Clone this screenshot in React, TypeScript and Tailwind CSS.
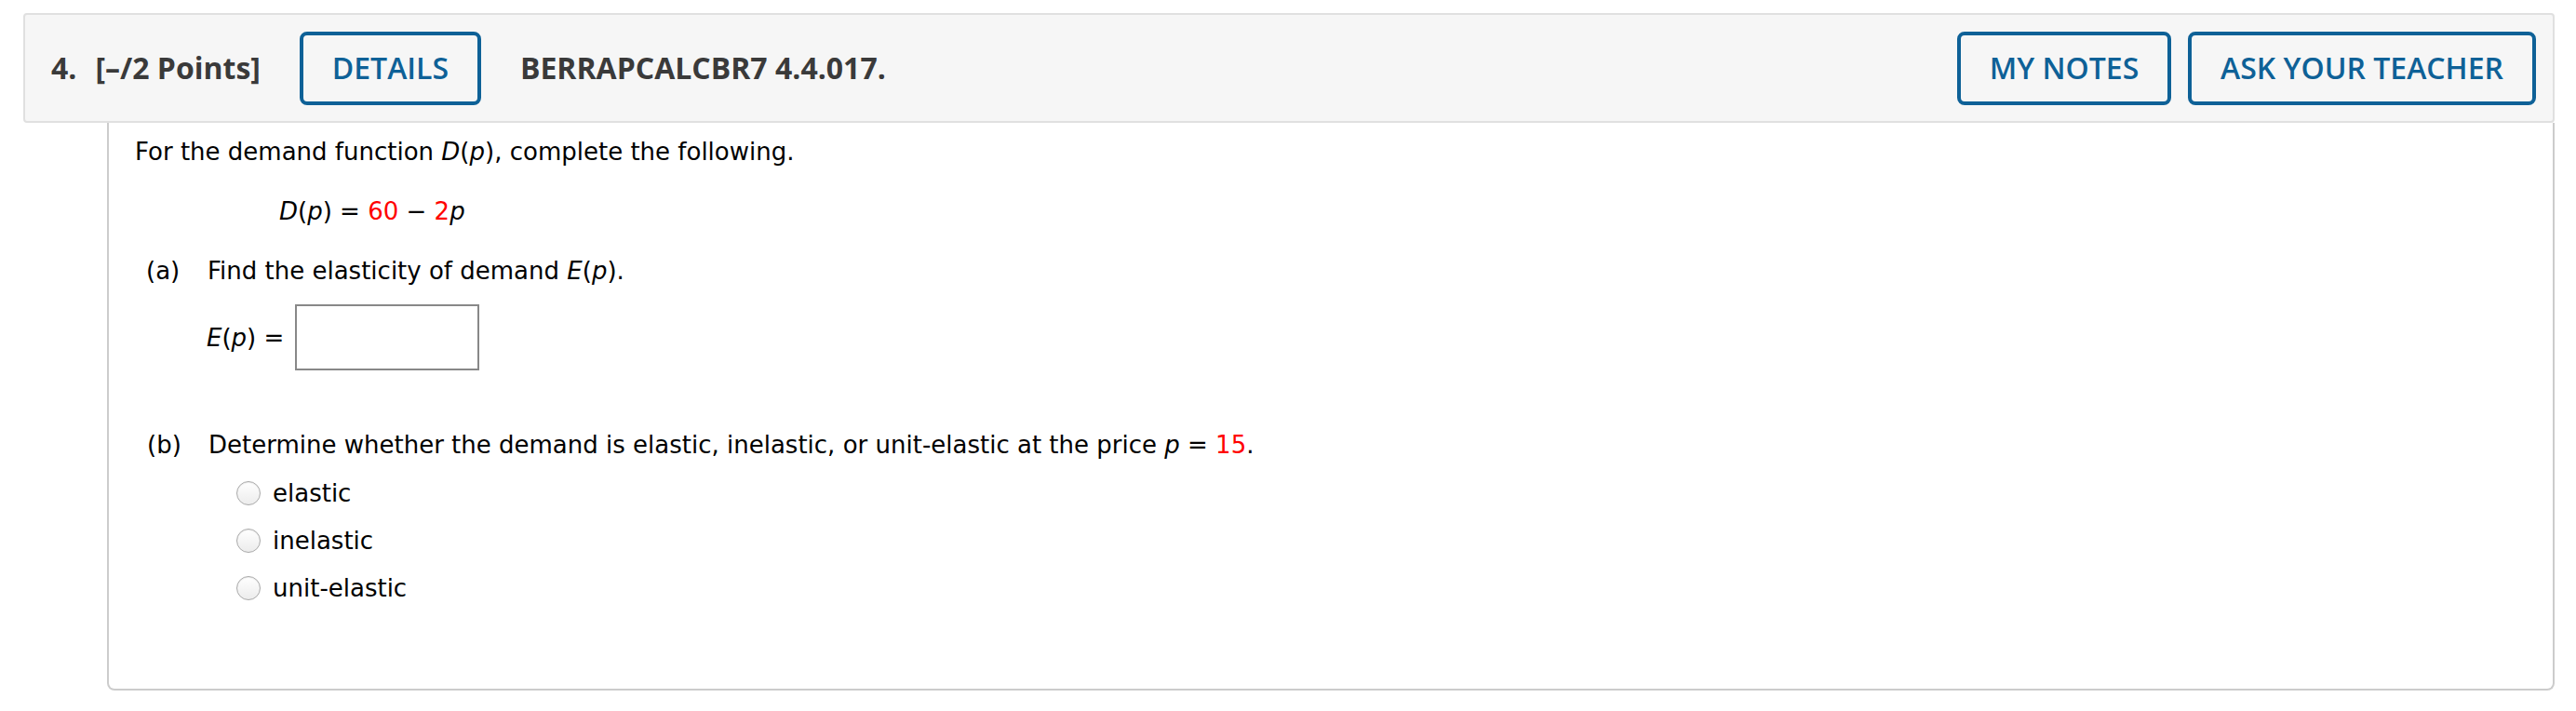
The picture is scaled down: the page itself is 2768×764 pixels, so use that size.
import React from "react";

const headerFont = { fontFamily: '"Open Sans", "Liberation Sans", sans-serif' };

function OutlineButton({ label, width }: { label: string; width: string }) {
  return (
    <button
      className={`h-[79px] ${width} border-[4px] border-[#0e6197] rounded-[8px] bg-[#f6f6f6] text-[#0e6197] text-[32px] font-semibold flex items-center justify-center`}
      style={headerFont}
    >
      {label}
    </button>
  );
}

function Radio({ label }: { label: string }) {
  return (
    <label className="flex items-center h-[32px] pl-[109px]">
      <span className="w-[26px] h-[26px] rounded-full border border-[#a9a9a9] bg-gradient-to-b from-[#ffffff] to-[#ececec] shadow-[inset_0_1px_1px_rgba(0,0,0,0.08)]" />
      <span className="ml-[13px]">{label}</span>
    </label>
  );
}

export default function App() {
  return (
    <div className="w-[2768px] h-[764px] bg-white pt-[14px] pl-[25px] pr-[23px]">
      {/* question header */}
      <div
        className="h-[118px] border-2 border-[#e0e0e0] bg-[#f6f6f6] rounded-[4px] flex items-center pl-[28px] pr-[18px] text-[#3a3a3a] text-[32px] font-bold"
        style={headerFont}
      >
        <span>4.</span>
        <span className="ml-[20px]">[–/2 Points]</span>
        <div className="ml-[42px]">
          <OutlineButton label="DETAILS" width="w-[195px]" />
        </div>
        <span className="ml-[42px]">BERRAPCALCBR7 4.4.017.</span>
        <div className="ml-auto flex gap-[18px]">
          <OutlineButton label="MY NOTES" width="w-[230px]" />
          <OutlineButton label="ASK YOUR TEACHER" width="w-[374px]" />
        </div>
      </div>

      {/* question body */}
      <div
        className="ml-[90px] h-[610px] border-2 border-t-0 border-[#cccccc] rounded-b-[8px] pt-[15px] pl-[28px] text-black text-[26px] leading-[32px]"
        style={{ fontFamily: '"DejaVu Sans", Verdana, sans-serif' }}
      >
        <p>
          For the demand function <i>D</i>(<i>p</i>), complete the following.
        </p>
        <p className="mt-[32px] pl-[155px]">
          <i>D</i>(<i>p</i>) = <span className="text-[#ff0000]">60</span> − <span className="text-[#ff0000]">2</span><i>p</i>
        </p>

        <div className="mt-[32px] pl-[12px] flex">
          <span className="w-[66px]">(a)</span>
          <span>
            Find the elasticity of demand <i>E</i>(<i>p</i>).
          </span>
        </div>
        <div className="mt-[20px] pl-[77px] flex items-center">
          <span>
            <i>E</i>(<i>p</i>) =
          </span>
          <span className="ml-[12px] w-[198px] h-[71px] border-2 border-[#888888] bg-white" />
        </div>

        <div className="mt-[64px] pl-[13px] flex">
          <span className="w-[66px]">(b)</span>
          <span>
            Determine whether the demand is elastic, inelastic, or unit-elastic at the price <i>p</i> ={" "}
            <span className="text-[#ff0000]">15</span>.
          </span>
        </div>
        <div className="mt-[20px] flex flex-col gap-[19px]">
          <Radio label="elastic" />
          <Radio label="inelastic" />
          <Radio label="unit-elastic" />
        </div>
      </div>
    </div>
  );
}
